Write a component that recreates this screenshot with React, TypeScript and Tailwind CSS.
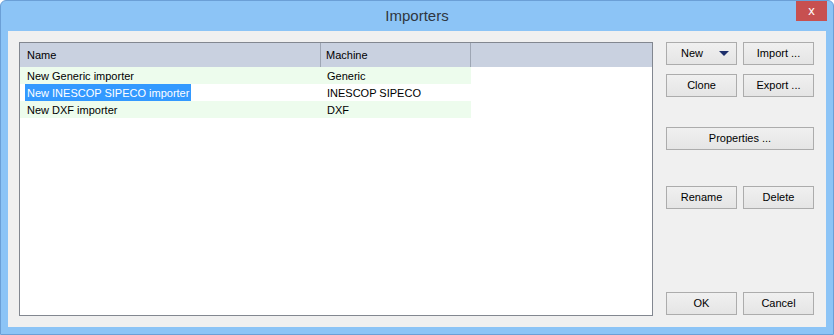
import React from "react"

const font = { fontFamily: '"Liberation Sans", Arial, sans-serif' }

interface Importer {
  name: string
  machine: string
  selected?: boolean
}

const importers: Importer[] = [
  { name: "New Generic importer", machine: "Generic" },
  { name: "New INESCOP SIPECO importer", machine: "INESCOP SIPECO", selected: true },
  { name: "New DXF importer", machine: "DXF" },
]

function Btn({ children, className = "" }: { children: React.ReactNode; className?: string }) {
  return (
    <button
      className={`h-[23px] border border-[#acacac] bg-gradient-to-b from-[#f0f0f0] to-[#e5e5e5] text-[11px] text-black flex items-center justify-center ${className}`}
    >
      {children}
    </button>
  )
}

export default function App() {
  return (
    <div
      className="w-[834px] h-[335px] bg-[#8cc4f6] border border-[#6b9fd6] rounded-t-[6px] flex flex-col overflow-hidden"
      style={font}
    >
      {/* Title bar */}
      <div className="h-[30px] relative flex items-center justify-center">
        <span className="text-[15px] text-[#2f3640]">Importers</span>
        <div className="absolute right-[6px] top-[-1px] w-[31px] h-[21px] bg-[#c75050] flex items-center justify-center text-white text-[13px] leading-none">
          x
        </div>
      </div>

      {/* Client area */}
      <div className="flex-1 mx-[7px] mb-[7px] bg-[#f0f0f0] p-[11px] flex gap-[13px]">
        {/* List view */}
        <div className="w-[634px] h-[274px] border border-[#828790] bg-white flex flex-col">
          <div className="h-[24px] bg-[#c9d1e0] flex text-[11px] text-black">
            <div className="w-[301px] border-r border-[#9ea6b4] flex items-center pl-[7px]">Name</div>
            <div className="w-[150px] border-r border-[#9ea6b4] flex items-center pl-[5px]">Machine</div>
            <div className="flex-1" />
          </div>
          {importers.map((imp) => (
            <div
              key={imp.name}
              className={`h-[17px] w-[451px] flex items-stretch text-[11px] ${imp.selected ? "bg-white" : "bg-[#edfced]"}`}
            >
              <div className="w-[302px] pl-[5px] flex items-stretch">
                <span
                  className={`px-[2px] flex items-center pt-[1px] ${imp.selected ? "bg-[#3399ff] text-white" : "text-black"}`}
                >
                  {imp.name}
                </span>
              </div>
              <div className="pl-[5px] text-black flex items-center pt-[1px]">{imp.machine}</div>
            </div>
          ))}
        </div>

        {/* Buttons */}
        <div className="w-[148px] h-[274px] flex flex-col">
          <div className="flex gap-[6px]">
            <Btn className="w-[71px]">
              <span className="ml-[14px]">New</span>
              <svg width="10" height="5" viewBox="0 0 10 5" className="ml-auto mr-[7px]">
                <path d="M0 0 H10 L5 5 Z" fill="#1d2f6b" />
              </svg>
            </Btn>
            <Btn className="w-[71px]">Import ...</Btn>
          </div>
          <div className="flex gap-[6px] mt-[9px]">
            <Btn className="w-[71px]">Clone</Btn>
            <Btn className="w-[71px]">Export ...</Btn>
          </div>
          <Btn className="w-[148px] mt-[30px]">Properties ...</Btn>
          <div className="flex gap-[6px] mt-[36px]">
            <Btn className="w-[71px]">Rename</Btn>
            <Btn className="w-[71px]">Delete</Btn>
          </div>
          <div className="flex gap-[6px] mt-auto mb-[1px]">
            <Btn className="w-[71px]">OK</Btn>
            <Btn className="w-[71px]">Cancel</Btn>
          </div>
        </div>
      </div>
    </div>
  )
}
